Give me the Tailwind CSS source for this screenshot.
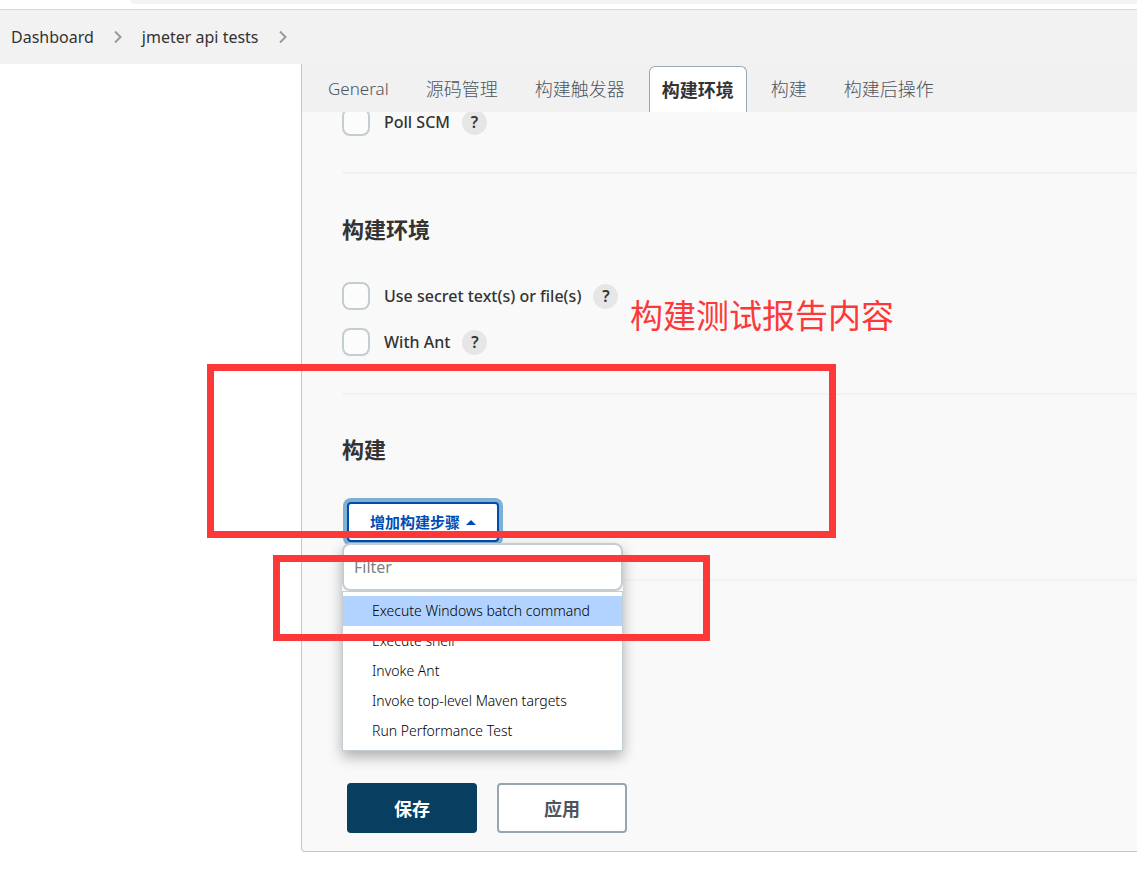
<!DOCTYPE html>
<html lang="zh-CN">
<head>
    <meta charset="UTF-8" />
    <meta name="viewport" content="width=device-width, initial-scale=1.0" />
    <title>jmeter api tests Config [Jenkins]</title>
    <script src="https://cdn.jsdelivr.net/npm/@tailwindcss/browser@4"></script>
</head>
<body class="relative min-h-screen overflow-x-hidden bg-white font-['Noto_Sans','Noto_Sans_CJK_SC',sans-serif] text-base text-[#333]">
    <!-- Browser edge -->
    <div class="h-[10px] border-b border-[#d5d8da] pl-[130px]">
        <div class="h-1 rounded-bl-lg bg-[#f1f3f4]"></div>
    </div>

    <!-- Breadcrumbs -->
    <nav class="flex h-[54px] items-center gap-5 bg-[#f2f2f2] pl-[11px] font-normal">
        <a href="#">Dashboard</a>
        <svg class="h-3 w-2" viewBox="0 0 8 12" fill="none" stroke="#999" stroke-width="2"><path d="M1 0.5 6.5 6 1 11.5" /></svg>
        <a href="#">jmeter api tests</a>
        <svg class="h-3 w-2" viewBox="0 0 8 12" fill="none" stroke="#999" stroke-width="2"><path d="M1 0.5 6.5 6 1 11.5" /></svg>
    </nav>

    <main class="ml-[301px] rounded-bl border-b border-l border-[#bfc9ce] bg-[#f9f9f9]">
        <!-- Tabs stay above the scrolled form -->
        <div class="relative z-10 flex h-12 items-end gap-[11px] bg-[#f1f1f1] pl-[13px] text-lg font-light text-[#4d545d]">
            <a href="#" class="flex h-[46px] items-center px-[13px] text-[17px] whitespace-nowrap">General</a>
            <a href="#" class="flex h-[46px] items-center px-[13px] whitespace-nowrap">源码管理</a>
            <a href="#" class="flex h-[46px] items-center px-[13px] whitespace-nowrap">构建触发器</a>
            <a href="#" class="flex h-[46px] items-center rounded-t-md border border-b-0 border-[#98a9b3] bg-white px-3 font-bold whitespace-nowrap text-[#333]">构建环境</a>
            <a href="#" class="flex h-[46px] items-center px-[13px] whitespace-nowrap">构建</a>
            <a href="#" class="flex h-[46px] items-center px-[13px] whitespace-nowrap">构建后操作</a>
        </div>

        <form class="pb-[18px] pl-10">
            <section class="border-b-2 border-[#f2f2f2] pb-9">
                <div class="-mt-1 flex h-7 items-center">
                    <input id="poll" type="checkbox" class="size-7 appearance-none rounded-lg border-2 border-[#c3cdd2] bg-[#fcfcfc]" />
                    <label for="poll" class="ml-[14px] leading-4 font-medium">Poll SCM</label>
                    <button type="button" class="ml-3 size-[25px] rounded-full bg-[#e6e6e6] text-base/4 font-semibold">?</button>
                </div>
            </section>

            <section class="border-b-2 border-[#f2f2f2] pt-10 pb-[37px]">
                <h2 class="mb-[38px] text-[22px]/[30px] font-bold">构建环境</h2>
                <div class="flex flex-col gap-[18px]">
                    <div class="flex h-7 items-center">
                        <input id="secret" type="checkbox" class="size-7 appearance-none rounded-lg border-2 border-[#c3cdd2] bg-[#fcfcfc]" />
                        <label for="secret" class="ml-[14px] leading-4 font-medium">Use secret text(s) or file(s)</label>
                        <button type="button" class="ml-3 size-[25px] rounded-full bg-[#e6e6e6] text-base/4 font-semibold">?</button>
                    </div>
                    <div class="flex h-7 items-center">
                        <input id="ant" type="checkbox" class="size-7 appearance-none rounded-lg border-2 border-[#c3cdd2] bg-[#fcfcfc]" />
                        <label for="ant" class="ml-[14px] leading-4 font-medium">With Ant</label>
                        <button type="button" class="ml-3 size-[25px] rounded-full bg-[#e6e6e6] text-base/4 font-semibold">?</button>
                    </div>
                </div>
            </section>

            <section class="border-b-2 border-[#f2f2f2] pt-[39px] pb-[37px]">
                <h2 class="mb-[38px] text-[22px]/[30px] font-bold">构建</h2>
                <div class="relative">
                    <button type="button" class="ml-[5px] flex h-10 w-[152px] items-center justify-center gap-[6px] rounded border-2 border-[#004bb5] bg-white text-[15px] font-bold text-[#004bb5] ring-4 ring-[#80b0cf]">
                        增加构建步骤
                        <svg class="h-[5px] w-[10px]" viewBox="0 0 10 5" fill="#004bb5"><path d="M0 5 5 0l5 5z" /></svg>
                    </button>

                    <!-- Build step menu -->
                    <div class="absolute top-[41px] left-0 z-10 w-[281px] rounded-t-lg shadow-[0_6px_14px_rgba(0,0,0,0.3)]">
                        <input type="text" placeholder="Filter" aria-label="Filter" class="block h-12 w-full rounded-lg border-2 border-[#c3cdd2] bg-white px-[10px] text-base placeholder:text-[#808080]" />
                        <ul class="border border-[#c3cdd2] bg-white pt-1 pb-1 text-sm/[30px] font-light text-black">
                            <li class="bg-[#b2d3ff] pl-[29px]">Execute Windows batch command</li>
                            <li class="pl-[29px]">Execute shell</li>
                            <li class="pl-[29px]">Invoke Ant</li>
                            <li class="pl-[29px]">Invoke top-level Maven targets</li>
                            <li class="pl-[29px]">Run Performance Test</li>
                        </ul>
                    </div>
                </div>
            </section>

            <div class="mt-[202px] ml-[5px] flex gap-5 text-lg font-bold">
                <button type="submit" class="h-[50px] w-[130px] rounded bg-[#083f61] pt-[2px] text-white">保存</button>
                <button type="button" class="h-[50px] w-[130px] rounded border-2 border-[#98a6af] bg-white pt-[2px] text-[#4d545d]">应用</button>
            </div>
        </form>
    </main>

    <!-- Red notes over the form -->
    <p class="absolute top-[292px] left-[630px] z-20 text-[33px]/[48px] whitespace-nowrap text-[#fc3838]">构建测试报告内容</p>
    <div class="pointer-events-none absolute top-[364px] left-[207px] z-20 h-[174px] w-[629px] border-7 border-[#fc3838]"></div>
    <div class="pointer-events-none absolute top-[555px] left-[273px] z-20 h-[86px] w-[437px] border-7 border-[#fc3838]"></div>
</body>
</html>
